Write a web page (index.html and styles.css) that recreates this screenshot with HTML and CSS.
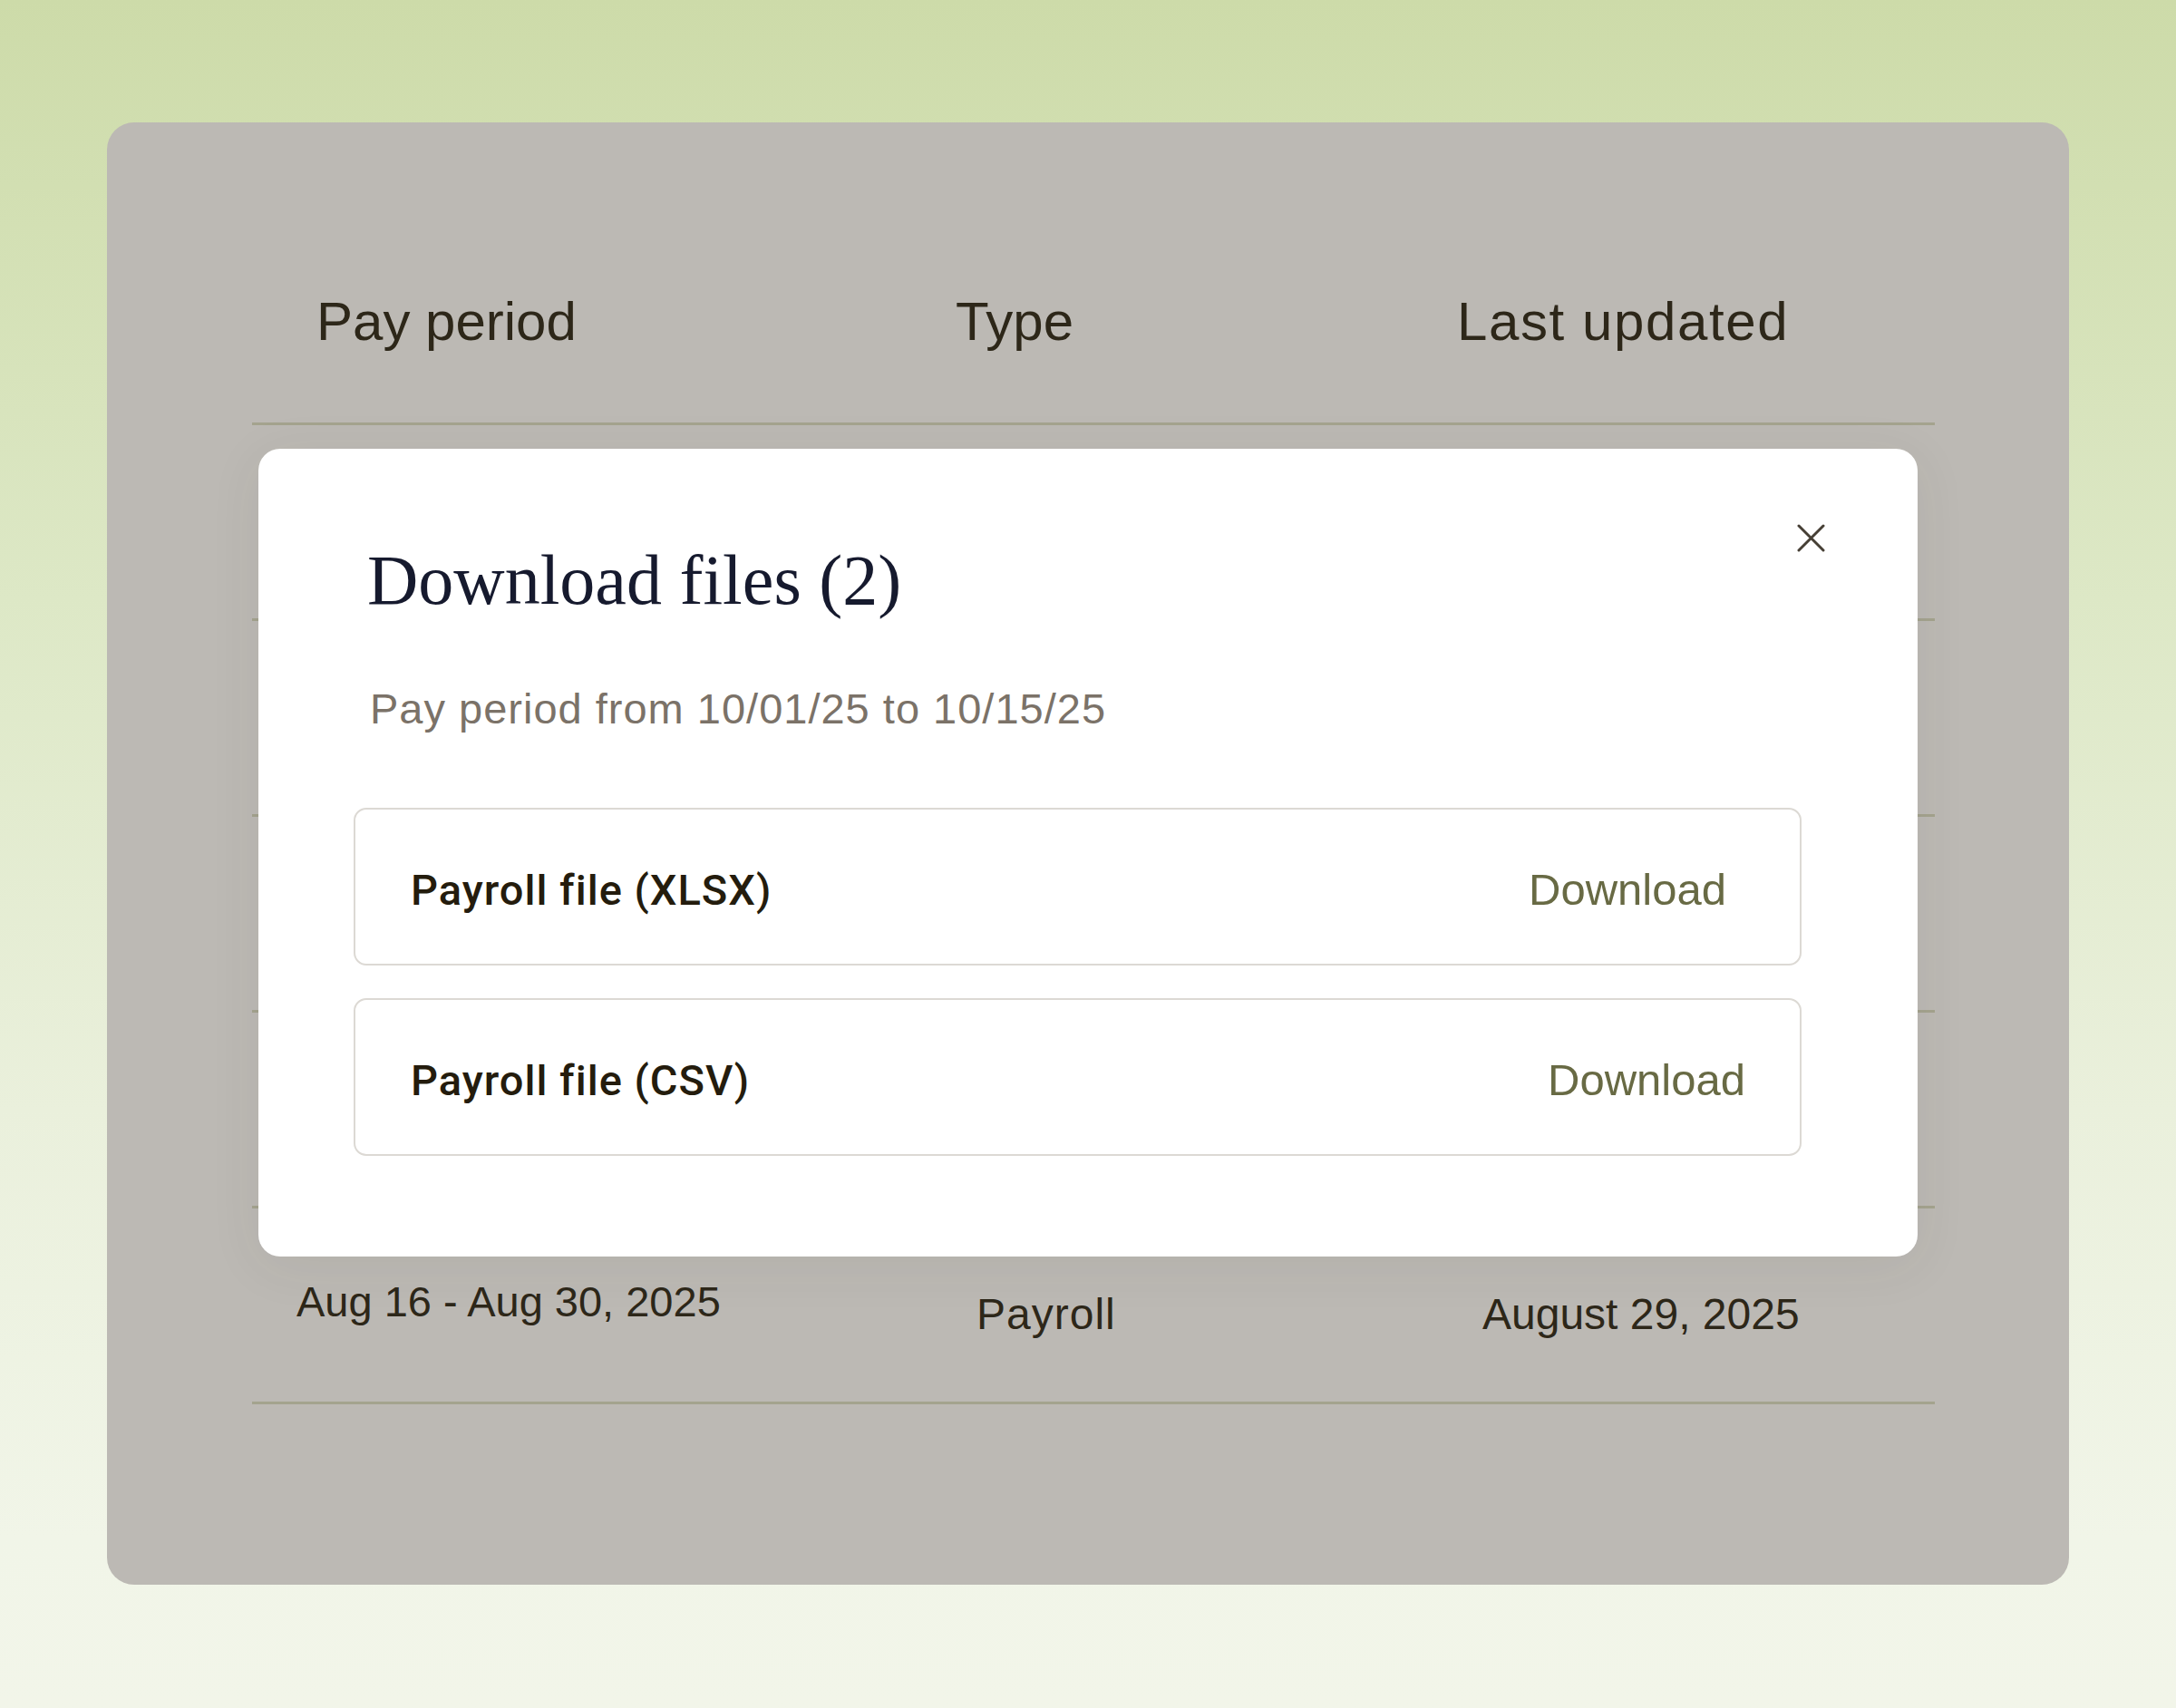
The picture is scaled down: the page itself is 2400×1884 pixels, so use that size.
FILE: index.html
```html
<!DOCTYPE html>
<html lang="en">
<head>
<meta charset="utf-8">
<title>Download files</title>
<link rel="stylesheet" href="styles.css">
</head>
<body>
<div class="page">
  <div class="card">
    <div class="table">
      <div class="thead">
        <div class="th th-period">Pay period</div>
        <div class="th th-type">Type</div>
        <div class="th th-updated">Last updated</div>
      </div>
      <div class="tr tr-hidden"></div>
      <div class="tr tr-hidden"></div>
      <div class="tr tr-hidden"></div>
      <div class="tr tr-hidden"></div>
      <div class="tr">
        <div class="td td-period">Aug 16 - Aug 30, 2025</div>
        <div class="td td-type">Payroll</div>
        <div class="td td-updated">August 29, 2025</div>
      </div>
    </div>

    <div class="modal" role="dialog" aria-labelledby="modal-title">
      <button class="close" type="button" aria-label="Close">
        <svg viewBox="0 0 31 31" width="31" height="31" aria-hidden="true">
          <path d="M2 2 L29 29 M29 2 L2 29" fill="none" stroke="#463f35" stroke-width="3" stroke-linecap="round"/>
        </svg>
      </button>
      <h2 class="title" id="modal-title">Download files (2)</h2>
      <p class="subtitle">Pay period from 10/01/25 to 10/15/25</p>
      <div class="files">
        <div class="file file-first">
          <span class="file-name">Payroll file (XLSX)</span>
          <a class="download" href="#">Download</a>
        </div>
        <div class="file">
          <span class="file-name">Payroll file (CSV)</span>
          <a class="download" href="#">Download</a>
        </div>
      </div>
    </div>
  </div>
</div>
</body>
</html>
```

FILE: styles.css
```css
html, body {
  margin: 0;
  padding: 0;
}

body {
  width: 2400px;
  height: 1884px;
  background: linear-gradient(180deg, #cddba9 0%, #dde8c6 35%, #eaf0dc 65%, #f1f5e8 90%, #f2f5e9 100%);
  font-family: "Liberation Sans", Arial, sans-serif;
  color: #2d2719;
}

.page {
  box-sizing: border-box;
  width: 2400px;
  height: 1884px;
  padding-top: 135px;
  display: flex;
  align-items: flex-start;
  justify-content: center;
}

.card {
  position: relative;
  box-sizing: border-box;
  width: 2164px;
  height: 1613px;
  padding: 184px 148px 0 160px;
  background: #bcb9b4;
  border-radius: 30px;
}

.table {
  width: 1856px;
}

.thead,
.tr {
  display: grid;
  grid-template-columns: 762px 560px 534px;
  align-items: start;
  border-bottom: 3px solid #a4a38e;
}

.thead {
  padding-bottom: 75px;
}

.th {
  font-size: 60px;
  line-height: 72px;
  color: #2d2719;
}

.th-period { padding-left: 71px; }
.th-type { padding-left: 14px; }
.th-updated { padding-left: 7px; letter-spacing: 1.6px; }

.tr {
  box-sizing: border-box;
  height: 216px;
}

.td {
  font-size: 48px;
  line-height: 48px;
  color: #2d2719;
  padding-top: 93px;
}

.td-period {
  font-size: 47px;
  line-height: 47px;
  padding-top: 79px;
  padding-left: 49px;
}
.td-type { padding-left: 37px; letter-spacing: 1px; }
.td-updated { padding-left: 35px; }

/* Modal overlay */
.modal {
  position: absolute;
  top: 360px;
  left: 167px;
  box-sizing: border-box;
  width: 1830px;
  height: 891px;
  padding: 106px 128px 0 105px;
  background: #ffffff;
  border-radius: 24px;
  box-shadow: 0 10px 60px rgba(60, 55, 45, 0.07);
}

.close {
  position: absolute;
  top: 83px;
  right: 102px;
  width: 31px;
  height: 31px;
  padding: 0;
  border: 0;
  background: none;
  cursor: pointer;
}

.close svg {
  display: block;
}

.title {
  margin: 0 0 0 15px;
  font-family: "Liberation Serif", "Times New Roman", serif;
  font-weight: 400;
  font-size: 78px;
  line-height: 78px;
  color: #161a2e;
}

.subtitle {
  margin: 79px 0 0 18px;
  font-size: 47px;
  line-height: 47px;
  letter-spacing: 1px;
  color: #7b7268;
}

.files {
  margin-top: 86px;
  display: flex;
  flex-direction: column;
  gap: 36px;
}

.file {
  box-sizing: border-box;
  height: 174px;
  display: flex;
  align-items: center;
  justify-content: space-between;
  padding: 7px 60px 0 61px;
  border: 2px solid #dcd9d4;
  border-radius: 14px;
}

.file-first {
  padding-right: 81px;
}

.file-name {
  font-family: Roboto, "Liberation Sans", sans-serif;
  font-weight: 500;
  font-size: 47px;
  line-height: 47px;
  letter-spacing: 1px;
  color: #241c0d;
}

.download {
  font-size: 49px;
  line-height: 49px;
  color: #686a44;
  text-decoration: none;
}
```
